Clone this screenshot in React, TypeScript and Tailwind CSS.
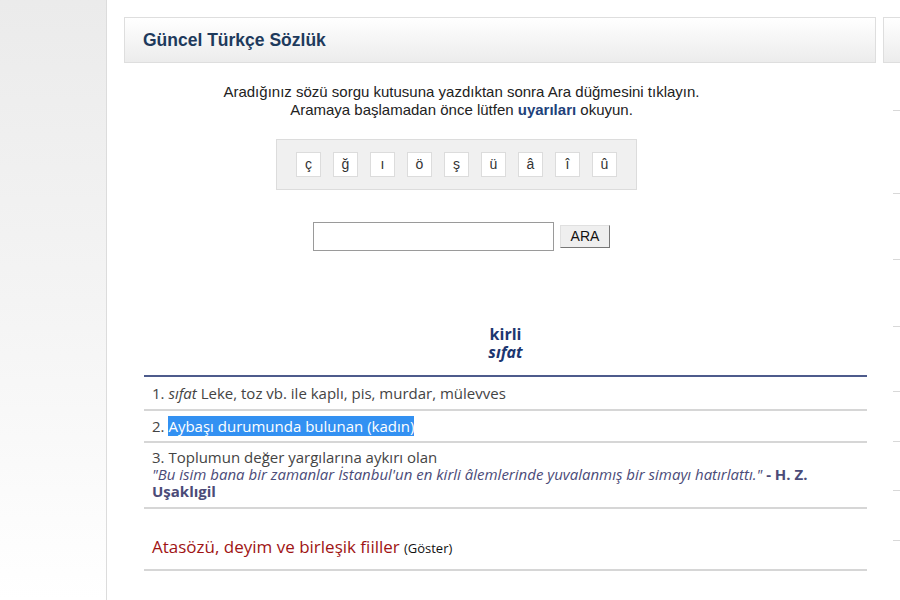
import React from 'react';

const CHARS = ['ç', 'ğ', 'ı', 'ö', 'ş', 'ü', 'â', 'î', 'û'];
const TICKS = [110, 193, 259, 326, 391, 441, 490, 540];

export default function App() {
  return (
    <div className="flex w-[900px] h-[600px] overflow-hidden bg-white font-['Liberation_Sans',Arial,sans-serif]">
      {/* left gutter */}
      <div className="w-[107px] shrink-0 h-full border-r border-[#dcdcdc] bg-gradient-to-b from-[#ebebeb] via-[#f4f4f4] to-white" />

      {/* main column */}
      <div className="w-[752px] shrink-0 ml-[17px] pt-[17px]">
        <div className="h-[46px] border border-[#dedede] bg-gradient-to-b from-white to-[#ececec] flex items-center pl-[18px]">
          <h1 className="text-[17.5px] font-bold text-[#1e3a5c]">Güncel Türkçe Sözlük</h1>
        </div>

        <div className="w-[675px] flex flex-col items-center">
          <p className="mt-[20px] text-[15px] leading-[18px] text-[#222] text-center">
            Aradığınız sözü sorgu kutusuna yazdıktan sonra Ara düğmesini tıklayın.
            <br />
            Aramaya başlamadan önce lütfen <b className="text-[#21417a]">uyarıları</b> okuyun.
          </p>

          <div className="mt-[20px] w-[361px] h-[51px] bg-[#f0f0f0] border border-[#dcdcdc] flex items-center justify-center gap-[12px] ml-[-10px]">
            {CHARS.map((c) => (
              <span
                key={c}
                className="w-[25px] h-[25px] bg-white border border-[#dcdcdc] flex items-center justify-center text-[14px] text-[#333]"
              >
                {c}
              </span>
            ))}
          </div>

          <div className="mt-[32px] flex items-center gap-[6px]">
            <div className="w-[241px] h-[29px] border border-[#9a9a9a] bg-white" />
            <div className="w-[50px] h-[23px] bg-[#efefef] border border-[#e0e0e0] border-r-[#777] border-b-[#777] flex items-center justify-center text-[14px] text-[#111]">
              ARA
            </div>
          </div>
        </div>

        <div className="ml-[20px] w-[723px] mt-[74px] font-['Open_Sans',sans-serif]">
          <div className="text-center text-[#1c3670] font-bold text-[16px] leading-[18px]">
            <div>kirli</div>
            <div className="italic">sıfat</div>
          </div>

          <div className="mt-[14px] border-t-2 border-[#4d5b8c]" />

          <div className="px-[8px] pt-[6px] pb-[6px] text-[15px] leading-[20px] text-[#444] border-b-2 border-[#d6d6d6]">
            1. <i>sıfat</i> Leke, toz vb. ile kaplı, pis, murdar, mülevves
          </div>
          <div className="px-[8px] py-[5px] text-[15px] leading-[20px] text-[#444] border-b-2 border-[#d6d6d6]">
            2. <span className="bg-[#3391f2] text-white">Aybaşı durumunda bulunan (kadın)</span>
          </div>
          <div className="px-[8px] pt-[6px] pb-[7px] text-[15px] leading-[17px] text-[#444] border-b-2 border-[#d6d6d6]">
            <div>3. Toplumun değer yargılarına aykırı olan</div>
            <div className="text-[#4b4b78] pr-[40px]">
              <i>"Bu isim bana bir zamanlar İstanbul'un en kirli âlemlerinde yuvalanmış bir simayı hatırlattı."</i>
              <b> - H. Z. Uşaklıgil</b>
            </div>
          </div>

          <div className="pt-[25px] pb-[9px] px-[8px] border-b-2 border-[#d6d6d6]">
            <span className="text-[17px] text-[#a01414]">Atasözü, deyim ve birleşik fiiller</span>{' '}
            <span className="text-[13px] text-[#111]">(Göster)</span>
          </div>
        </div>
      </div>

      {/* right column (cut off) */}
      <div className="flex-1 ml-[7px] pt-[17px] relative">
        <div className="h-[46px] border border-r-0 border-[#dedede] bg-gradient-to-b from-white to-[#ececec]" />
        {TICKS.map((t) => (
          <div key={t} className="absolute right-0 w-[7px] h-px bg-[#d8d8d8]" style={{ top: t }} />
        ))}
      </div>
    </div>
  );
}
